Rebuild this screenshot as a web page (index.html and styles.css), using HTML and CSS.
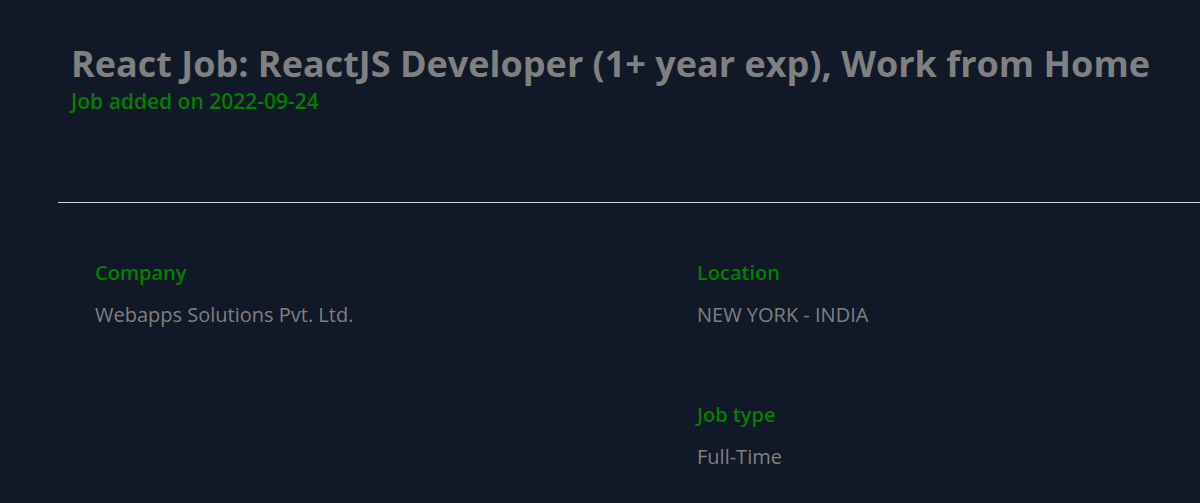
FILE: index.html
```html
<!DOCTYPE html>
<html>
<head>
<meta charset="utf-8">
<link rel="stylesheet" href="styles.css">
</head>
<body>
<main class="page">
  <header class="head">
    <h1 class="title">React Job: ReactJS Developer (1+ year exp), Work from Home</h1>
    <p class="date">Job added on 2022-09-24</p>
  </header>
  <hr class="rule">
  <section class="details">
    <div class="item">
      <h3 class="label">Company</h3>
      <p class="value">Webapps Solutions Pvt. Ltd.</p>
    </div>
    <div class="item">
      <h3 class="label">Location</h3>
      <p class="value">NEW YORK - INDIA</p>
    </div>
    <div class="item"></div>
    <div class="item">
      <h3 class="label">Job type</h3>
      <p class="value">Full-Time</p>
    </div>
  </section>
</main>
</body>
</html>
```
FILE: styles.css
```css
html, body {
  margin: 0;
  padding: 0;
  background: #111827;
  font-family: "Open Sans", "Noto Sans", sans-serif;
  overflow: hidden;
}
.page {
  padding-left: 58px;
  width: 1200px;
  box-sizing: border-box;
}
.head {
  padding: 40px 0 0 13px;
  height: 202px;
  box-sizing: border-box;
}
.title {
  margin: 0;
  font-size: 36px;
  font-weight: 700;
  color: #808080;
  line-height: 48px;
  white-space: nowrap;
}
.date {
  margin: 0;
  font-size: 21px;
  font-weight: 600;
  color: #008000;
  line-height: 26px;
}
.rule {
  margin: 0;
  border: 0;
  border-top: 1px solid #d1d5db;
}
.details {
  display: grid;
  grid-template-columns: 602px 1fr;
  padding: 56px 0 0 37px;
  row-gap: 72px;
}
.label {
  margin: 0;
  font-size: 20px;
  font-weight: 600;
  color: #008000;
  line-height: 28px;
}
.value {
  margin: 14px 0 0;
  font-size: 20px;
  color: #808080;
  line-height: 28px;
}
```
